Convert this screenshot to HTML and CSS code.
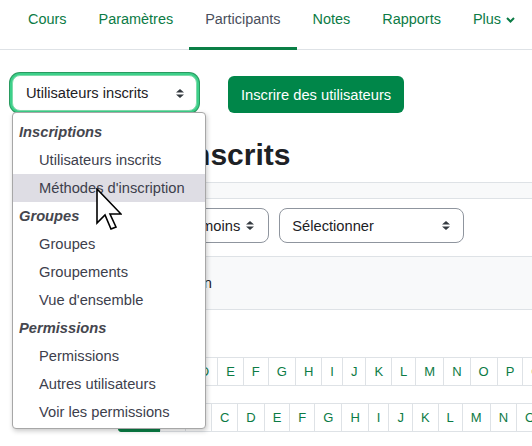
FILE: index.html
```html
<!DOCTYPE html>
<html lang="fr">
<head>
<meta charset="utf-8">
<title>Participants</title>
<link rel="stylesheet" href="styles.css">
</head>
<body>
<nav class="tabs">
  <ul class="tab-list">
    <li><a class="tab">Cours</a></li>
    <li><a class="tab">Paramètres</a></li>
    <li><a class="tab active">Participants</a></li>
    <li><a class="tab">Notes</a></li>
    <li><a class="tab">Rapports</a></li>
    <li><a class="tab">Plus<svg class="chev" width="9" height="6" viewBox="0 0 9 6"><path d="M1 1 L4.5 4.5 L8 1" fill="none" stroke="currentColor" stroke-width="2"/></svg></a></li>
  </ul>
</nav>
<main class="page">
  <div class="actions">
    <div class="select select-focus"><span>Utilisateurs inscrits</span><svg class="sort" width="8" height="9" viewBox="0 0 8 9"><path d="M0 3.6 L4 0 L8 3.6Z M0 5.4 L4 9 L8 5.4Z"/></svg></div>
    <button class="btn-primary">Inscrire des utilisateurs</button>
  </div>
  <h2 class="title">Utilisateurs inscrits</h2>
  <div class="bar"></div>
  <div class="filter-row">
    <span class="filter-label">Correspond à</span>
    <div class="select select-auto"><span>Au moins</span><svg class="sort" width="8" height="9" viewBox="0 0 8 9"><path d="M0 3.6 L4 0 L8 3.6Z M0 5.4 L4 9 L8 5.4Z"/></svg></div>
    <div class="select select-wide"><span>Sélectionner</span><svg class="sort" width="8" height="9" viewBox="0 0 8 9"><path d="M0 3.6 L4 0 L8 3.6Z M0 5.4 L4 9 L8 5.4Z"/></svg></div>
  </div>
  <div class="band"><span class="band-text">Ajouter une condition</span></div>
  <div class="initials initials-first">
    <span class="ini-label">Prénom</span>
    <ul class="pagination">
      <li class="page-item active">Tout</li><li class="page-item">A</li><li class="page-item">B</li><li class="page-item">C</li><li class="page-item">D</li><li class="page-item">E</li><li class="page-item">F</li><li class="page-item">G</li><li class="page-item">H</li><li class="page-item">I</li><li class="page-item">J</li><li class="page-item">K</li><li class="page-item">L</li><li class="page-item">M</li><li class="page-item">N</li><li class="page-item">O</li><li class="page-item">P</li><li class="page-item">Q</li><li class="page-item">R</li><li class="page-item">S</li><li class="page-item">T</li><li class="page-item">U</li><li class="page-item">V</li><li class="page-item">W</li><li class="page-item">X</li><li class="page-item">Y</li><li class="page-item">Z</li>
    </ul>
  </div>
  <div class="initials">
    <span class="ini-label">Nom de famille</span>
    <ul class="pagination">
      <li class="page-item active">Tout</li><li class="page-item">A</li><li class="page-item">B</li><li class="page-item">C</li><li class="page-item">D</li><li class="page-item">E</li><li class="page-item">F</li><li class="page-item">G</li><li class="page-item">H</li><li class="page-item">I</li><li class="page-item">J</li><li class="page-item">K</li><li class="page-item">L</li><li class="page-item">M</li><li class="page-item">N</li><li class="page-item">O</li><li class="page-item">P</li><li class="page-item">Q</li><li class="page-item">R</li><li class="page-item">S</li><li class="page-item">T</li><li class="page-item">U</li><li class="page-item">V</li><li class="page-item">W</li><li class="page-item">X</li><li class="page-item">Y</li><li class="page-item">Z</li>
    </ul>
  </div>
</main>

<div class="listbox">
  <div class="group">Inscriptions</div>
  <div class="option">Utilisateurs inscrits</div>
  <div class="option hover">Méthodes d'inscription</div>
  <div class="group">Groupes</div>
  <div class="option">Groupes</div>
  <div class="option">Groupements</div>
  <div class="option">Vue d'ensemble</div>
  <div class="group">Permissions</div>
  <div class="option">Permissions</div>
  <div class="option">Autres utilisateurs</div>
  <div class="option">Voir les permissions</div>
</div>

<svg class="cursor" width="26" height="42" viewBox="0 0 26 42"><path d="M1 1 L1 35 L9 27 L15 41 L20 39 L14 26 L25 26 Z" fill="#fff" stroke="#000" stroke-width="1.6" stroke-linejoin="miter"/></svg>
</body>
</html>
```

FILE: styles.css
```css
html, body {
  margin: 0;
  padding: 0;
}
body {
  font-family: "Liberation Sans", Arial, sans-serif;
  font-size: 14.7px;
  color: #1d2125;
  background: #fff;
  width: 532px;
  height: 446px;
  overflow: hidden;
  position: relative;
}

/* tabs */
.tabs {
  height: 49px;
  border-bottom: 1px solid #dee2e6;
}
.tab-list {
  list-style: none;
  margin: 0;
  padding: 0 0 0 12px;
  display: flex;
  align-items: flex-start;
}
.tab {
  display: flex;
  align-items: flex-start;
  box-sizing: border-box;
  height: 50px;
  padding: 9px 16px 0;
  line-height: 20px;
  font-size: 14.45px;
  color: #0c7b45;
  border-bottom: 3px solid transparent;
  white-space: nowrap;
}
.tab.active {
  color: #4a4f5c;
  border-bottom-color: #0a7f46;
}
.chev {
  margin: 8px 0 0 5px;
}

/* page */
.page {
  padding-left: 12px;
}
.actions {
  display: flex;
  align-items: flex-start;
  gap: 31px;
  margin-top: 25px;
}
.select {
  box-sizing: border-box;
  display: flex;
  align-items: center;
  justify-content: space-between;
  border: 1px solid #8f959e;
  border-radius: 8px;
  background: #fff;
  color: #1d2125;
  white-space: nowrap;
}
.sort {
  fill: #343a40;
  flex: none;
}
.select-focus {
  width: 185px;
  height: 36px;
  padding: 0 12px 0 13px;
  border-color: #7fdcab;
  box-shadow: 0 0 0 2px #3dd08a, 0 0 0 3px #2a9a60;
}
.btn-primary {
  height: 37px;
  margin-top: 1px;
  padding: 0 13px;
  border: none;
  border-radius: 6px;
  background: #008649;
  color: #fff;
  font-family: inherit;
  font-size: 14.7px;
}
.title {
  margin: 24px 0 0;
  font-size: 30px;
  line-height: 36px;
  font-weight: bold;
  color: #1d2125;
}
.bar {
  margin-top: 9px;
  height: 15px;
  border-top: 1px solid #dee2e6;
  border-bottom: 1px solid #dee2e6;
  background: #f8f9fa;
}
.filter-row {
  display: flex;
  align-items: center;
  gap: 10px;
  margin-top: 9px;
  padding-left: 10px;
}
.filter-label {
  width: 134px;
}
.select-auto {
  height: 35px;
  padding: 0 14px 0 12px;
  gap: 6px;
}
.select-wide {
  width: 185px;
  height: 35px;
  padding: 0 13px 0 12px;
}
.band {
  margin-top: 13px;
  height: 52px;
  border-top: 1px solid #dee2e6;
  border-bottom: 1px solid #dee2e6;
  background: #f8f9fa;
  display: flex;
  align-items: center;
  padding-left: 62px;
}
.band-text {
  color: #1d2125;
}

/* initials bars */
.initials {
  display: flex;
  align-items: center;
  margin-top: 17px;
  white-space: nowrap;
}
.initials-first {
  margin-top: 47px;
}
.ini-label {
  margin-right: 8px;
}
.pagination {
  list-style: none;
  margin: 0;
  padding: 0;
  display: flex;
}
.page-item {
  font-size: 13px;
  line-height: 19px;
  padding: 4px 8px;
  border: 1px solid #dee2e6;
  margin-left: -1px;
  color: #0c7b45;
  background: #fff;
}
.page-item:first-child {
  margin-left: 0;
  border-radius: 3px 0 0 3px;
}
.page-item.active {
  background: #0a7f46;
  border-color: #0a7f46;
  color: #fff;
}

/* open select list */
.listbox {
  position: absolute;
  left: 12px;
  top: 112px;
  width: 194px;
  box-sizing: border-box;
  padding: 5px 0 2px;
  background: #fff;
  border: 1px solid #a7a7a7;
  border-radius: 4px;
  box-shadow: 1px 2px 5px rgba(0, 0, 0, 0.22);
}
.group, .option {
  height: 28px;
  line-height: 28px;
  white-space: nowrap;
}
.group {
  padding-left: 6px;
  font-weight: bold;
  font-style: italic;
  color: #45464e;
}
.option {
  padding-left: 26px;
  color: #3d404c;
}
.option.hover {
  background: #dedde4;
}
.cursor {
  position: absolute;
  left: 96px;
  top: 188px;
}
```
